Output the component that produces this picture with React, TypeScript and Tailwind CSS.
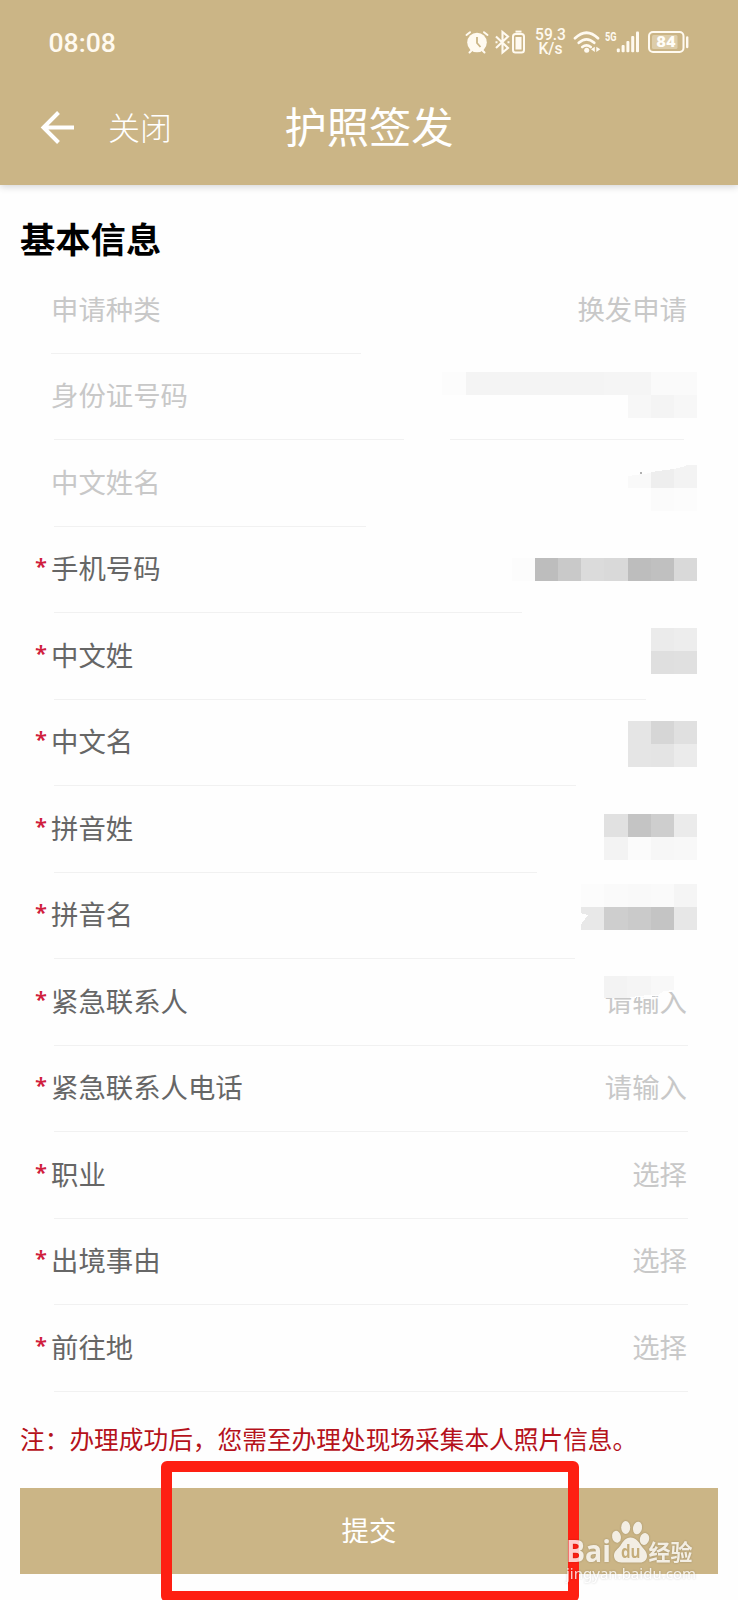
type Field = {
  label: string;
  value?: string;
  required?: boolean;
  // rule under the row, as drawn left to right
  line: string;
};

const fields: Field[] = [
  { label: "申请种类", value: "换发申请", line: "ml-[51px] w-[310px]" },
  { label: "身份证号码", line: "ml-[54px] w-[630px]" },
  { label: "中文姓名", line: "ml-[54px] w-[312px]" },
  { label: "手机号码", required: true, line: "ml-[54px] w-[468px]" },
  { label: "中文姓", required: true, line: "ml-[54px] w-[592px]" },
  { label: "中文名", required: true, line: "ml-[54px] w-[522px]" },
  { label: "拼音姓", required: true, line: "ml-[54px] w-[483px]" },
  { label: "拼音名", required: true, line: "ml-[54px] w-[521px]" },
  { label: "紧急联系人", value: "请输入", required: true, line: "ml-[54px] w-[634px]" },
  { label: "紧急联系人电话", value: "请输入", required: true, line: "ml-[54px] w-[634px]" },
  { label: "职业", value: "选择", required: true, line: "ml-[54px] w-[634px]" },
  { label: "出境事由", value: "选择", required: true, line: "ml-[54px] w-[634px]" },
  { label: "前往地", value: "选择", required: true, line: "ml-[54px] w-[634px]" },
];

// [top, first column counted from the right edge, colours left to right]
const mosaic: [number, number, string[]][] = [
  [372, 11, ["#fcfcfc", "#f4f4f4", "#f4f4f4", "#f4f4f4", "#f4f4f4", "#f4f4f4", "#f4f4f4", "#f5f5f5", "#f5f5f5", "#fafafa", "#fafafa"]],
  [395, 3, ["#f7f7f7", "#f4f4f4", "#f7f7f7"]],
  [488, 2, ["#fbfbfb", "#fcfcfc"]],
  [558, 8, ["#fcfcfc", "#bdbdbd", "#c9c9c9", "#dbdbdb", "#d9d9d9", "#bdbdbd", "#c0c0c0", "#d9d9d9"]],
  [628, 2, ["#ebebeb", "#ededed"]],
  [651, 2, ["#dfdfdf", "#e0e0e0"]],
  [721, 3, ["#e5e5e5", "#d6d6d6", "#e0e0e0"]],
  [744, 3, ["#e5e5e5", "#e4e4e4", "#ebebeb"]],
  [814, 4, ["#e1e1e1", "#c4c4c4", "#cecece", "#ebebeb"]],
  [837, 4, ["#f3f3f3", "#fbfbfb", "#f7f7f7", "#f8f8f8"]],
  [884, 5, ["#fcfcfc", "#fafafa", "#f9f9f9", "#fafafa", "#f5f5f5"]],
  [907, 5, ["#e8e8e8", "#cecece", "#cacaca", "#c4c4c4", "#e7e7e7"]],
];

function StatusBar() {
  return (
    <div className="flex h-[84px] items-center pl-[48.5px] text-[#fffaf0]">
      <span className="w-[416px] pt-[1px] font-['Roboto'] text-[26.6px] font-medium">08:08</span>
      {/* alarm, bluetooth and its battery */}
      <svg className="h-[28px] w-[62px]" viewBox="0 0 62 28" fill="none">
        <circle cx="12" cy="14.5" r="9.8" fill="currentColor" />
        <path d="M1.5 7L5 4.2M22.5 7L19 4.2M4.5 24.5l3-3M19.5 24.5l-3-3" stroke="currentColor" strokeWidth="2" strokeLinecap="round" />
        <path d="M12 9v6l3.5 4" stroke="#cbb586" strokeWidth="1.8" />
        <path d="M31 8.500l12 11.500-5.500 4.500V4l5.500 4.500L31 20" stroke="currentColor" strokeWidth="2.1" />
        <path d="M30.500 14.200h2M42.500 14.200h2" stroke="currentColor" strokeWidth="2" />
        <rect x="48" y="6" width="11" height="18.500" rx="2.5" stroke="currentColor" strokeWidth="2" />
        <rect x="50.5" y="9" width="6" height="12.500" fill="currentColor" />
        <path d="M50.500 3.600h6" stroke="currentColor" strokeWidth="2" />
      </svg>
      <div className="ml-[7px] w-[34px] text-center font-['Roboto'] text-[15.6px] leading-[14.5px] font-medium">
        <div>59.3</div>
        <div>K/s</div>
      </div>
      <svg className="ml-[5px] h-[28px] w-[30px]" viewBox="0 0 30 28" fill="none">
        <path d="M2 10.300Q13.500-0.800 25 10.300M5.800 14.800Q13.500 8 21.200 14.800M9.300 19Q13.500 15.600 17.700 19" stroke="currentColor" strokeWidth="2.7" strokeLinecap="round" />
        <circle cx="13.7" cy="22.300" r="2.500" fill="currentColor" />
        <path d="M21.800 18.700v5.200L18 21.300zM23.300 18.700v5.200l4-2.600z" fill="currentColor" />
      </svg>
      <svg className="ml-[2px] h-[28px] w-[36px]" viewBox="0 0 36 28" fill="currentColor">
        <text x="0" y="12.500" fontFamily="Roboto" fontSize="12.500" fontWeight="700" textLength="11.500" lengthAdjust="spacingAndGlyphs">5G</text>
        <rect x="11.800" y="20.500" width="3" height="3.800" rx="1" />
        <rect x="16.600" y="17" width="3" height="7.300" rx="1" />
        <rect x="21.400" y="13" width="3" height="11.300" rx="1" />
        <rect x="26.200" y="8" width="3" height="16.300" rx="1" />
        <rect x="31" y="3.600" width="3" height="20.700" rx="1" />
      </svg>
      <svg className="ml-[7px] h-[28px] w-[42px]" viewBox="0 0 42 28" fill="none">
        <rect x="1" y="4" width="34.500" height="20" rx="4" stroke="currentColor" strokeWidth="2" />
        <rect x="4" y="7" width="25.500" height="14" rx="1.500" fill="#ddcdaa" />
        <path d="M39.200 9.500v9.500" stroke="currentColor" strokeWidth="2.400" strokeLinecap="round" />
        <text x="18" y="19.300" textAnchor="middle" fill="#fffdf8" fontFamily="Roboto" fontSize="15.500" fontWeight="900" textLength="19.500" lengthAdjust="spacingAndGlyphs">84</text>
      </svg>
    </div>
  );
}

function NavBar() {
  return (
    <div className="grid h-[88px] grid-cols-[1fr_auto_1fr] items-center text-white">
      <div className="flex items-center pl-[40px]">
        <svg className="h-[34px] w-[35px]" viewBox="0 0 35 34" fill="none" stroke="currentColor" strokeWidth="4">
          <path d="M18.500 1.500L3.500 16.500l15 15M3 16.500h31" />
        </svg>
        <span className="ml-[33px] pb-[4px] text-[32px] leading-none font-light">关闭</span>
      </div>
      <h1 className="pb-[6px] text-[42.3px] leading-none">护照签发</h1>
    </div>
  );
}

function Row({ label, value, required, line }: Field) {
  return (
    <div className="flex h-[86.5px] flex-col justify-end">
      <div className={`flex h-[85.5px] items-center pr-[51px] pb-[3px] text-[27.4px] leading-none ${required ? "text-[#666]" : "text-[#c8c8c8]"}`}>
        <span className="w-[51px] pb-[5px] pl-[35px] font-['Noto_Sans'] text-[22px] font-semibold text-[#d0203c]">
          {required && "*"}
        </span>
        <span className="flex-1">{label}</span>
        <span className="text-[#c8c8c8]">{value}</span>
      </div>
      <div className={`h-px bg-[#f1f1f1] ${line}`} />
    </div>
  );
}

function Mosaic() {
  return (
    <svg className="pointer-events-none absolute left-0 top-0 h-[1600px] w-[738px]" viewBox="0 0 738 1600" shapeRendering="crispEdges">
      <path d="M404 430h46v20h-46z" fill="#fefefe" />
      {mosaic.map(([top, start, colors]) =>
        colors.map((color, i) => (
          <rect
            key={`${top}-${i}`}
            x={Math.round(697 - (start - i) * 23.15)}
            y={top}
            width={Math.round(697 - (start - i - 1) * 23.15) - Math.round(697 - (start - i) * 23.15)}
            height={23}
            fill={color}
          />
        )),
      )}
      {/* smudged name and the nick in the last pinyin block */}
      <path d="M628 476l23-3v15h-23z" fill="#f9f9f9" />
      <path d="M651 472l23-3v19h-23z" fill="#eeeeee" />
      <path d="M674 469l12-3v-1h11v23h-23z" fill="#f3f3f3" />
      <circle cx="641" cy="473" r="1" fill="#b0b0b0" />
      <path d="M580 913l8 2-6 8-2 3z" fill="#fefefe" />
      {/* strip that eats the top of the contact placeholder */}
      <path d="M604 980h86v12h-30v4l-32 2h-24z" fill="#fefefe" />
      <path d="M604 976h23v22h-23z" fill="#f3f3f3" />
      <path d="M627 976h24v19l-14 1-10 2z" fill="#f5f5f5" />
      <path d="M651 976h23v14l-10 1-6 4h-7z" fill="#f8f8f8" />
    </svg>
  );
}

function Watermark() {
  return (
    <svg className="absolute left-[564px] top-[1516px] h-[76px] w-[140px] drop-shadow-[0_0_1px_rgba(0,0,0,0.25)]" viewBox="0 0 140 76" fill="#fff" opacity="0.78">
      <text x="2" y="45.500" fontFamily="Open Sans" fontSize="29.500" fontWeight="700" textLength="45" lengthAdjust="spacingAndGlyphs">Bai</text>
      <ellipse cx="52.500" cy="20.800" rx="4.400" ry="6" transform="rotate(-12 52.500 20.800)" />
      <ellipse cx="61.700" cy="11.500" rx="4.500" ry="6.400" />
      <ellipse cx="73.500" cy="12" rx="4.500" ry="6.400" transform="rotate(12 73.500 12)" />
      <ellipse cx="80.500" cy="23" rx="4.600" ry="6" transform="rotate(15 80.500 23)" />
      <path d="M66.500 21.500c5 0 8 4 10.500 8 3 4 6 6 6 10.500 0 4-3 6.500-7 6.500H57.500c-5 0-7.500-3-7.500-7 0-4.500 4-6.500 6.500-10 2.500-4 5-8 10-8z" />
      <text x="57" y="41.500" fill="#c4ac78" fontFamily="Open Sans" fontSize="18" fontWeight="700" textLength="19.500" lengthAdjust="spacingAndGlyphs">du</text>
      <text x="84.500" y="44" fontFamily="Noto Sans CJK SC" fontSize="22" fontWeight="700">经验</text>
      <text x="2" y="62.500" fontFamily="Noto Sans" fontSize="15" textLength="130">jingyan.baidu.com</text>
    </svg>
  );
}

export default function App() {
  return (
    <div className="relative h-[1600px] w-[738px] overflow-hidden bg-[#fefefe] font-['Noto_Sans_CJK_SC',sans-serif]">
      <header className="h-[184.5px] bg-[#cbb586] shadow-[0_2px_7px_rgba(0,0,20,0.16)]">
        <StatusBar />
        <NavBar />
      </header>

      <main>
        <h2 className="flex h-[82.5px] items-end pb-[3px] pl-[20px] text-[35.3px] leading-[52px] font-bold text-black">基本信息</h2>
        {fields.map((field) => (
          <Row key={field.label} {...field} />
        ))}
        <p className="mt-[31px] pl-[20px] text-[24.7px] leading-[30px] whitespace-nowrap text-[#b5121b]">
          注：办理成功后，您需至办理处现场采集本人照片信息。
        </p>
        <button
          type="button"
          className="mx-[20px] mt-[35px] flex h-[86.5px] w-[698px] items-center justify-center bg-[#cbb586] pb-[2px] text-[27.4px] text-white"
        >
          提交
        </button>
      </main>

      <Mosaic />
      <div className="absolute left-[160.5px] top-[1460.5px] h-[141px] w-[418.5px] rounded-[6px] border-[11px] border-[#fe1f12]" />
      <Watermark />
    </div>
  );
}
